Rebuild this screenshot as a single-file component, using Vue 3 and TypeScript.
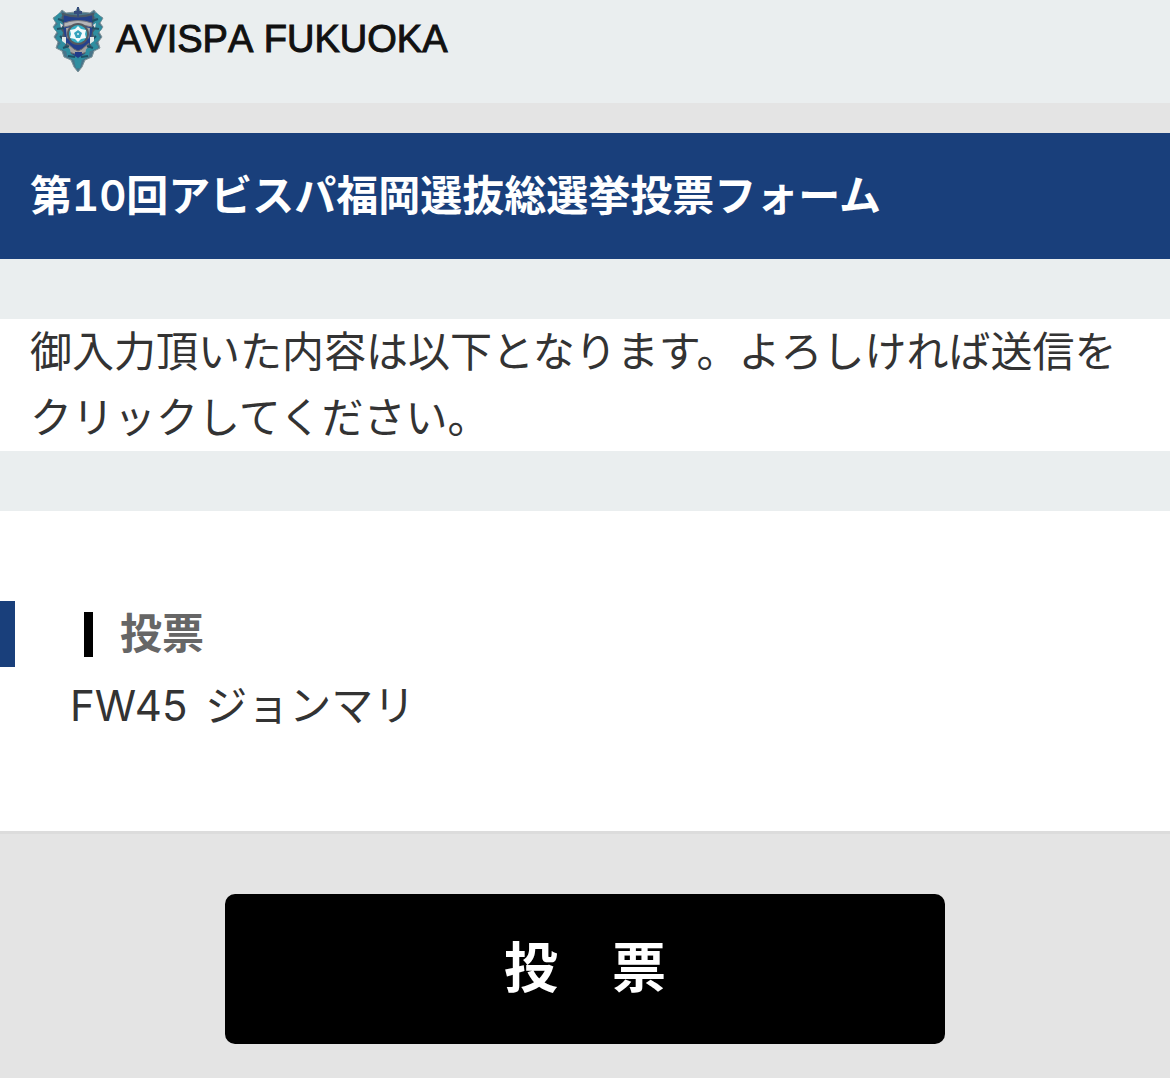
<script setup lang="ts">
const title = '第10回アビスパ福岡選抜総選挙投票フォーム'
const notice = '御入力頂いた内容は以下となります。よろしければ送信をクリックしてください。'
const question = '投票'
const answer = { position: 'FW45', player: 'ジョンマリ' }
</script>

<template>
  <div class="page">
    <header class="brand">
      <svg class="crest" viewBox="0 0 52 66" aria-hidden="true">
        <path d="M26 1l3 5 9 1 4-3 3 4 6 4-3 5 3 4-4 5 3 5-4 5 2 6-6 3-2 6-7 3-3 7-4 5-4-5-3-7-7-3-2-6-6-3 2-6-4-5 3-5-4-5 3-4-3-5 6-4 3-4 4 3 9-1z" fill="#48758a" stroke="#7f9399" stroke-width="1" />
        <path d="M11 8q15 5 30 0l1 14-4 19-12 16-12-16-4-19z" fill="#24418c" stroke="#4b5966" stroke-width="2" />
        <path d="M25 1h2v4h3v3h-3v3h-2V8h-3V5h3z" fill="#344c7d" />
        <path d="M12 17q14-5 28 0v4q-14-4-28 0z" fill="#b5b5b8" stroke="#77797e" stroke-width="1" />
        <path d="M14 22l7-1-6 12zM38 22l-7-1 6 12z" fill="#a8a5a4" />
        <path d="M15 37l7 6 4 2 4-2 7-6-2 9-9 3-9-3z" fill="#a4a2a2" stroke="#67686b" stroke-width="1" />
        <path d="M23 46h7l-1 9-3 3-3-3z" fill="#203b88" />
        <g fill="none" stroke="#2f8ea0" stroke-width="4" stroke-linejoin="round">
          <path d="M9 8l-5 5 5 5-5 4 5 5-3 5 6 5-4 4 8 3 1 5 7 4 2 9" />
          <path d="M43 8l5 5-5 5 5 4-5 5 3 5-6 5 4 4-8 3-1 5-7 4-2 9" />
        </g>
        <g fill="none" stroke="#1e5065" stroke-width="2">
          <path d="M6 13l6 2M5 23l7-1M8 30l4 4M11 42l6-2M16 50l7 1M46 13l-6 2M47 23l-7-1M44 30l-4 4M41 42l-6-2M36 50l-7 1" />
        </g>
        <path d="M10 31h4v7l-4-3zM42 31h-4v7l4-3zM8 17l3 2-2 3zM44 17l-3 2 2 3z" fill="#e2e7e7" />
        <circle cx="26" cy="28" r="11" fill="#55595f" />
        <circle cx="26" cy="28" r="9" fill="#36aec3" />
        <path d="M26 20l3 3 5 1-1 4 1 4-5 1-3 3-3-3-5-1 1-4-1-4 5-1z" fill="#f3fafb" />
        <path d="M26 24l4 3-2 5h-4l-2-5z" fill="#35a2bc" />
        <circle cx="26" cy="28" r="1" fill="#dff1f4" />
      </svg>
      <span class="brand-name">AVISPA FUKUOKA</span>
    </header>

    <main>
      <h1 class="title">{{ title }}</h1>
      <p class="notice">{{ notice }}</p>
      <form @submit.prevent>
        <section class="entry">
          <h2 class="question">{{ question }}</h2>
          <p class="answer"><span class="position">{{ answer.position }}</span> {{ answer.player }}</p>
        </section>
        <div class="actions">
          <button class="submit" type="submit">投　票</button>
        </div>
      </form>
    </main>
  </div>
</template>

<style>
body {
  margin: 0;
  background: #e4e4e4;
}
</style>

<style scoped>
.page {
  background: #eaeeef;
  color: #333;
  font-family: Inter, "Noto Sans CJK JP", sans-serif;
  font-size: 42px;
  line-height: 66px;
}

.brand {
  display: flex;
  align-items: center;
  gap: 12px;
  padding: 6px 52px 31px;
  border-bottom: 30px solid #e4e4e4;
}

.crest {
  width: 52px;
  height: 66px;
}

.brand-name {
  color: #111;
  font-family: "Liberation Sans", sans-serif;
  font-size: 38px;
  font-kerning: none;
  -webkit-text-stroke: 1px #111;
}

.title {
  margin: 0;
  padding: 30px;
  background: #193f7b;
  color: #fff;
  font-size: 42px;
  font-variant-numeric: tabular-nums;
  font-weight: 600;
}

.notice {
  margin: 60px 0;
  padding: 0 30px;
  background: #fff;
}

.entry {
  padding: 90px 0 92px;
  background: #fff;
}

.question {
  display: flex;
  align-items: center;
  gap: 27px;
  margin: 0;
  padding-left: 69px;
  border-left: 15px solid #193f7b;
  color: #666;
  font-size: 42px;
  font-weight: 700;
}

.question::before {
  content: "";
  width: 9px;
  height: 45px;
  background: #000;
}

.answer {
  margin: 6px 0 0;
  padding: 0 70px;
}

.position {
  margin-right: 6px;
}

.actions {
  padding: 60px 30px 34px;
  border-top: 3px solid #dcdcdc;
  background: #e4e4e4;
}

.submit {
  display: block;
  width: 100%;
  max-width: 720px;
  margin: 0 auto;
  padding: 42px 0;
  border: 0;
  border-radius: 10px;
  background: #000;
  color: #fff;
  font-family: inherit;
  font-size: 54px;
  font-weight: 700;
  line-height: 66px;
  cursor: pointer;
}
</style>
